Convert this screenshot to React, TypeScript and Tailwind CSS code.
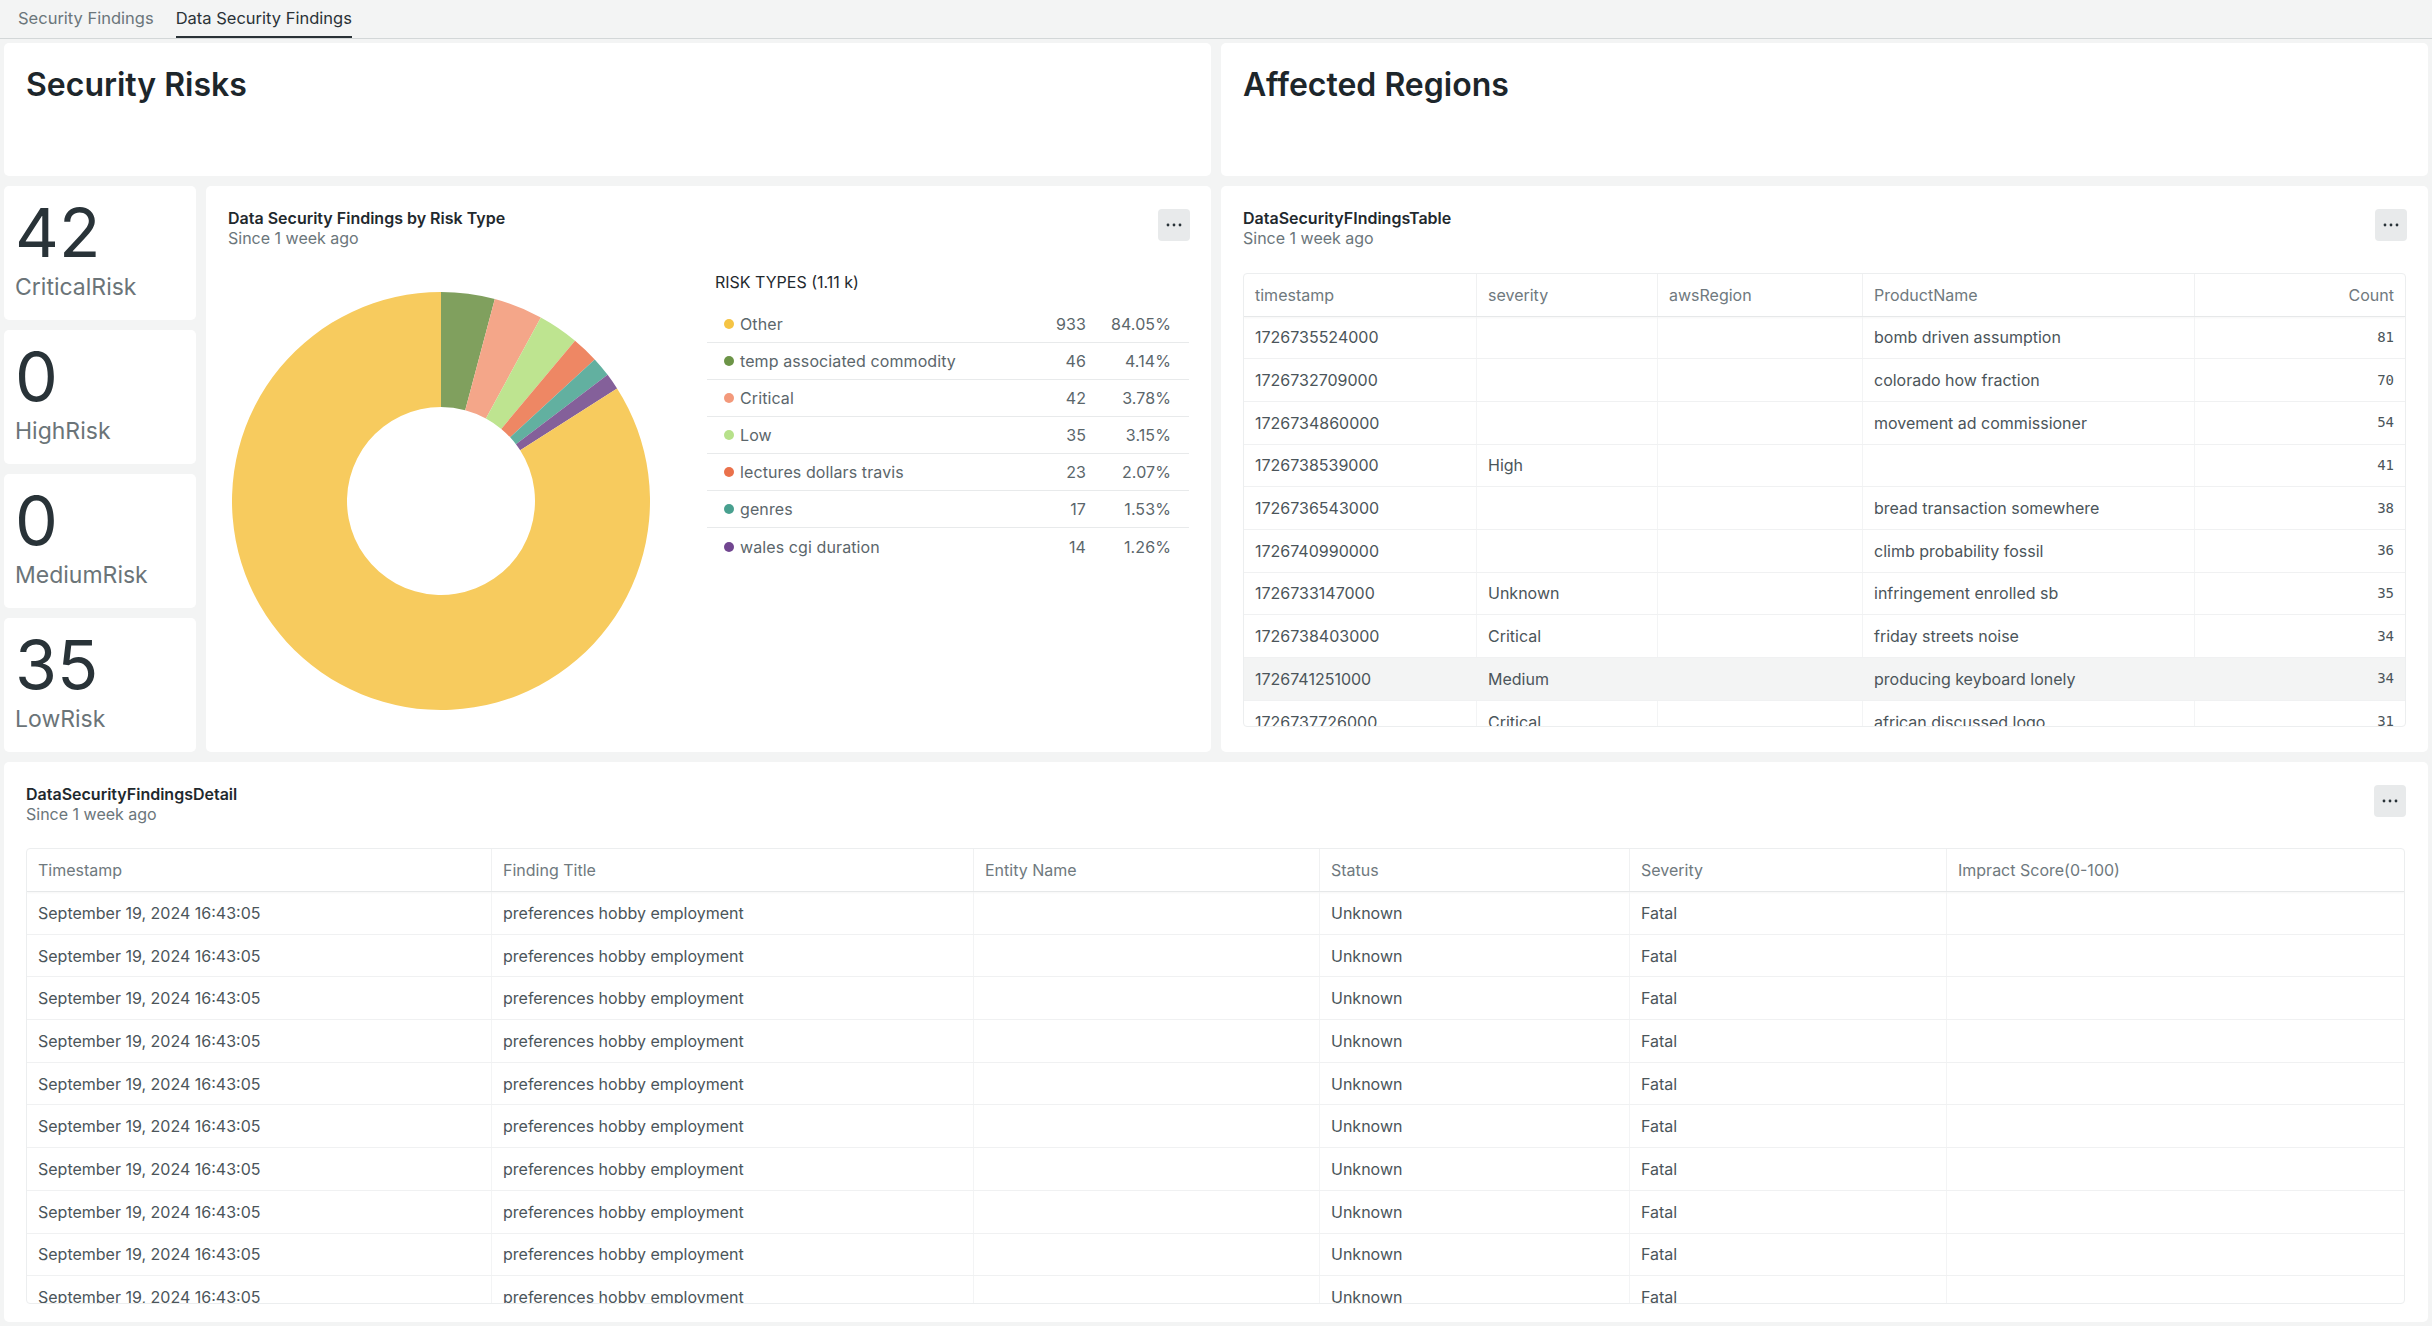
import React from "react";

const riskTypes = [
  { name: "Other", count: 933, pct: "84.05%", dot: "#f5c444", fill: "#f7cb5e" },
  { name: "temp associated commodity", count: 46, pct: "4.14%", dot: "#6c9447", fill: "#80a05e" },
  { name: "Critical", count: 42, pct: "3.78%", dot: "#f3997b", fill: "#f4a689" },
  { name: "Low", count: 35, pct: "3.15%", dot: "#b7e18b", fill: "#bee490" },
  { name: "lectures dollars travis", count: 23, pct: "2.07%", dot: "#ea714b", fill: "#ee8764" },
  { name: "genres", count: 17, pct: "1.53%", dot: "#48a08f", fill: "#62b0a0" },
  { name: "wales cgi duration", count: 14, pct: "1.26%", dot: "#714690", fill: "#84609a" },
];

const regionRows = [
  ["1726735524000", "", "", "bomb driven assumption", "81"],
  ["1726732709000", "", "", "colorado how fraction", "70"],
  ["1726734860000", "", "", "movement ad commissioner", "54"],
  ["1726738539000", "High", "", "", "41"],
  ["1726736543000", "", "", "bread transaction somewhere", "38"],
  ["1726740990000", "", "", "climb probability fossil", "36"],
  ["1726733147000", "Unknown", "", "infringement enrolled sb", "35"],
  ["1726738403000", "Critical", "", "friday streets noise", "34"],
  ["1726741251000", "Medium", "", "producing keyboard lonely", "34"],
  ["1726737726000", "Critical", "", "african discussed logo", "31"],
  ["1726739912000", "Low", "", "stable mirror outline", "29"],
];

const detailRows = Array.from({ length: 12 }, () => [
  "September 19, 2024 16:43:05",
  "preferences hobby employment",
  "",
  "Unknown",
  "Fatal",
  "",
]);

function MoreButton() {
  return (
    <button className="flex h-[32px] w-[32px] flex-none items-center justify-center rounded-[4px] bg-[#e8eaeb]">
      <svg width="16" height="4" viewBox="0 0 16 4">
        <circle cx="2" cy="2" r="1.4" fill="#293338" />
        <circle cx="8" cy="2" r="1.4" fill="#293338" />
        <circle cx="14" cy="2" r="1.4" fill="#293338" />
      </svg>
    </button>
  );
}

function WidgetHeader({ title }: { title: string }) {
  return (
    <div className="flex items-start justify-between">
      <div>
        <div className="text-[16px] font-semibold leading-[20px] text-[#1f292e]">{title}</div>
        <div className="text-[16px] leading-[21px] text-[#6b767b]">Since 1 week ago</div>
      </div>
      <div className="mt-[1px] -mr-px">
        <MoreButton />
      </div>
    </div>
  );
}

function Stat({ value, label }: { value: string; label: string }) {
  return (
    <div className="flex-1 rounded-[5px] bg-white pl-[11px] pt-[12px]">
      <div className="text-[68px] leading-[68px] text-[#293338]">{value}</div>
      <div className="mt-[7px] text-[23px] leading-[28px] text-[#6b7478]">{label}</div>
    </div>
  );
}

function slicePath(cx: number, cy: number, r0: number, r1: number, a0: number, a1: number) {
  const large = a1 - a0 > Math.PI ? 1 : 0;
  const p = (r: number, a: number) => `${cx + r * Math.sin(a)} ${cy - r * Math.cos(a)}`;
  return `M ${p(r1, a0)} A ${r1} ${r1} 0 ${large} 1 ${p(r1, a1)} L ${p(r0, a1)} A ${r0} ${r0} 0 ${large} 0 ${p(r0, a0)} Z`;
}

function Donut() {
  // slices run clockwise from 12 o'clock, "Other" goes last
  const order = [...riskTypes.slice(1), riskTypes[0]];
  const total = order.reduce((a, r) => a + r.count, 0);
  let acc = 0;
  return (
    <svg width="418" height="418" viewBox="0 0 418 418">
      {order.map((r) => {
        const a0 = (acc / total) * Math.PI * 2;
        acc += r.count;
        const a1 = (acc / total) * Math.PI * 2;
        return <path key={r.name} d={slicePath(209, 209, 94, 209, a0, a1)} fill={r.fill} />;
      })}
    </svg>
  );
}

function RiskTypeWidget() {
  return (
    <div className="rounded-[5px] bg-white px-[22px] pt-[22px]">
      <WidgetHeader title="Data Security Findings by Risk Type" />
      <div className="mt-[23px] flex items-start">
        <div className="w-[479px] flex-none pl-[4px] pt-[20px]">
          <Donut />
        </div>
        <div className="w-[482px] flex-none">
          <div className="pl-[8px] text-[16px] leading-[20px] text-[#1f292e]">RISK TYPES (1.11 k)</div>
          <div className="mt-[14px]">
            {riskTypes.map((r, i) => (
              <div
                key={r.name}
                className={`flex h-[37px] items-center text-[16px] tracking-[0.1px] text-[#5b666b] ${
                  i < riskTypes.length - 1 ? "border-b border-[#e8eaeb]" : ""
                }`}
              >
                <span className="ml-[17px] h-[10px] w-[10px] flex-none rounded-full" style={{ background: r.dot }} />
                <span className="ml-[6px] flex-1">{r.name}</span>
                <span className="w-[80px] text-right">{r.count}</span>
                <span className="w-[103px] pr-[18px] text-right">{r.pct}</span>
              </div>
            ))}
          </div>
        </div>
      </div>
    </div>
  );
}

function RegionTableWidget() {
  const headers = ["timestamp", "severity", "awsRegion", "ProductName", "Count"];
  return (
    <div className="rounded-[5px] bg-white px-[22px] pt-[22px]">
      <WidgetHeader title="DataSecurityFIndingsTable" />
      <div className="mt-[24px] h-[454px] overflow-hidden rounded-[4px] border border-[#eceeef]">
        <div className="grid h-[42.5px] grid-cols-[233px_181px_205px_332px_1fr] border-b border-[#e6e8e9] shadow-[0_1px_2px_rgba(0,0,0,0.04)]">
          {headers.map((h, i) => (
            <div
              key={h}
              className={`flex items-center px-[11px] text-[16px] text-[#6f797e] ${
                i === 4 ? "justify-end" : "border-r border-[#f0f1f2]"
              }`}
            >
              {h}
            </div>
          ))}
        </div>
        {regionRows.map((row, ri) => (
          <div
            key={ri}
            className={`grid h-[42.7px] grid-cols-[233px_181px_205px_332px_1fr] border-b border-[#f0f1f2] ${
              ri === 8 ? "bg-[#f3f4f4]" : ""
            }`}
          >
            {row.map((c, i) => (
              <div
                key={i}
                className={
                  i === 4
                    ? "flex items-center justify-end px-[11px] font-['DejaVu_Sans_Mono',monospace] text-[14px] text-[#4b555a]"
                    : `flex items-center px-[11px] text-[16px] text-[#4b555a] ${ri === 8 ? "" : "border-r border-[#f3f4f5]"}`
                }
              >
                {c}
              </div>
            ))}
          </div>
        ))}
      </div>
    </div>
  );
}

function DetailWidget() {
  const headers = ["Timestamp", "Finding Title", "Entity Name", "Status", "Severity", "Impract Score(0-100)"];
  return (
    <div className="h-[560px] rounded-[5px] bg-white pl-[22px] pr-[23px] pt-[22px]">
      <WidgetHeader title="DataSecurityFindingsDetail" />
      <div className="mt-[23px] h-[456px] overflow-hidden rounded-[4px] border border-[#eceeef]">
        <div className="grid h-[43px] grid-cols-[465px_482px_346px_310px_317px_1fr] border-b border-[#e6e8e9] shadow-[0_1px_2px_rgba(0,0,0,0.04)]">
          {headers.map((h, i) => (
            <div
              key={h}
              className={`flex items-center px-[11px] text-[16px] text-[#6f797e] ${i < 5 ? "border-r border-[#f0f1f2]" : ""}`}
            >
              {h}
            </div>
          ))}
        </div>
        {detailRows.map((row, ri) => (
          <div
            key={ri}
            className="grid h-[42.7px] grid-cols-[465px_482px_346px_310px_317px_1fr] border-b border-[#f0f1f2]"
          >
            {row.map((c, i) => (
              <div
                key={i}
                className={`flex items-center px-[11px] text-[16px] text-[#4b555a] ${i < 5 ? "border-r border-[#f3f4f5]" : ""}`}
              >
                {c}
              </div>
            ))}
          </div>
        ))}
      </div>
    </div>
  );
}

export default function App() {
  return (
    <div className="min-h-screen bg-[#f3f4f4] font-['Inter',sans-serif]">
      <div className="flex h-[39px] items-start gap-[22px] border-b border-[#d3d7d8] pl-[18px]">
        <div className="flex h-[38px] items-center border-b-2 border-transparent text-[16.5px] text-[#6b767b]">
          Security Findings
        </div>
        <div className="flex h-[38px] items-center border-b-2 border-[#2a3237] text-[16.5px] text-[#2a3237]">
          Data Security Findings
        </div>
      </div>

      <div className="flex flex-col gap-[10px] px-[4px] pb-[4px] pt-[4px]">
        <div className="grid h-[133px] grid-cols-2 gap-[10px]">
          <div className="rounded-[5px] bg-white px-[22px] pt-[22px]">
            <h1 className="text-[32px] font-semibold leading-[40px] text-[#1d262b]">Security Risks</h1>
          </div>
          <div className="rounded-[5px] bg-white px-[22px] pt-[22px]">
            <h1 className="text-[32px] font-semibold leading-[40px] text-[#1d262b]">Affected Regions</h1>
          </div>
        </div>

        <div className="grid h-[566px] grid-cols-[192px_1fr_1207px] gap-[10px]">
          <div className="flex flex-col gap-[10px]">
            <Stat value="42" label="CriticalRisk" />
            <Stat value="0" label="HighRisk" />
            <Stat value="0" label="MediumRisk" />
            <Stat value="35" label="LowRisk" />
          </div>
          <RiskTypeWidget />
          <RegionTableWidget />
        </div>

        <DetailWidget />
      </div>
    </div>
  );
}
